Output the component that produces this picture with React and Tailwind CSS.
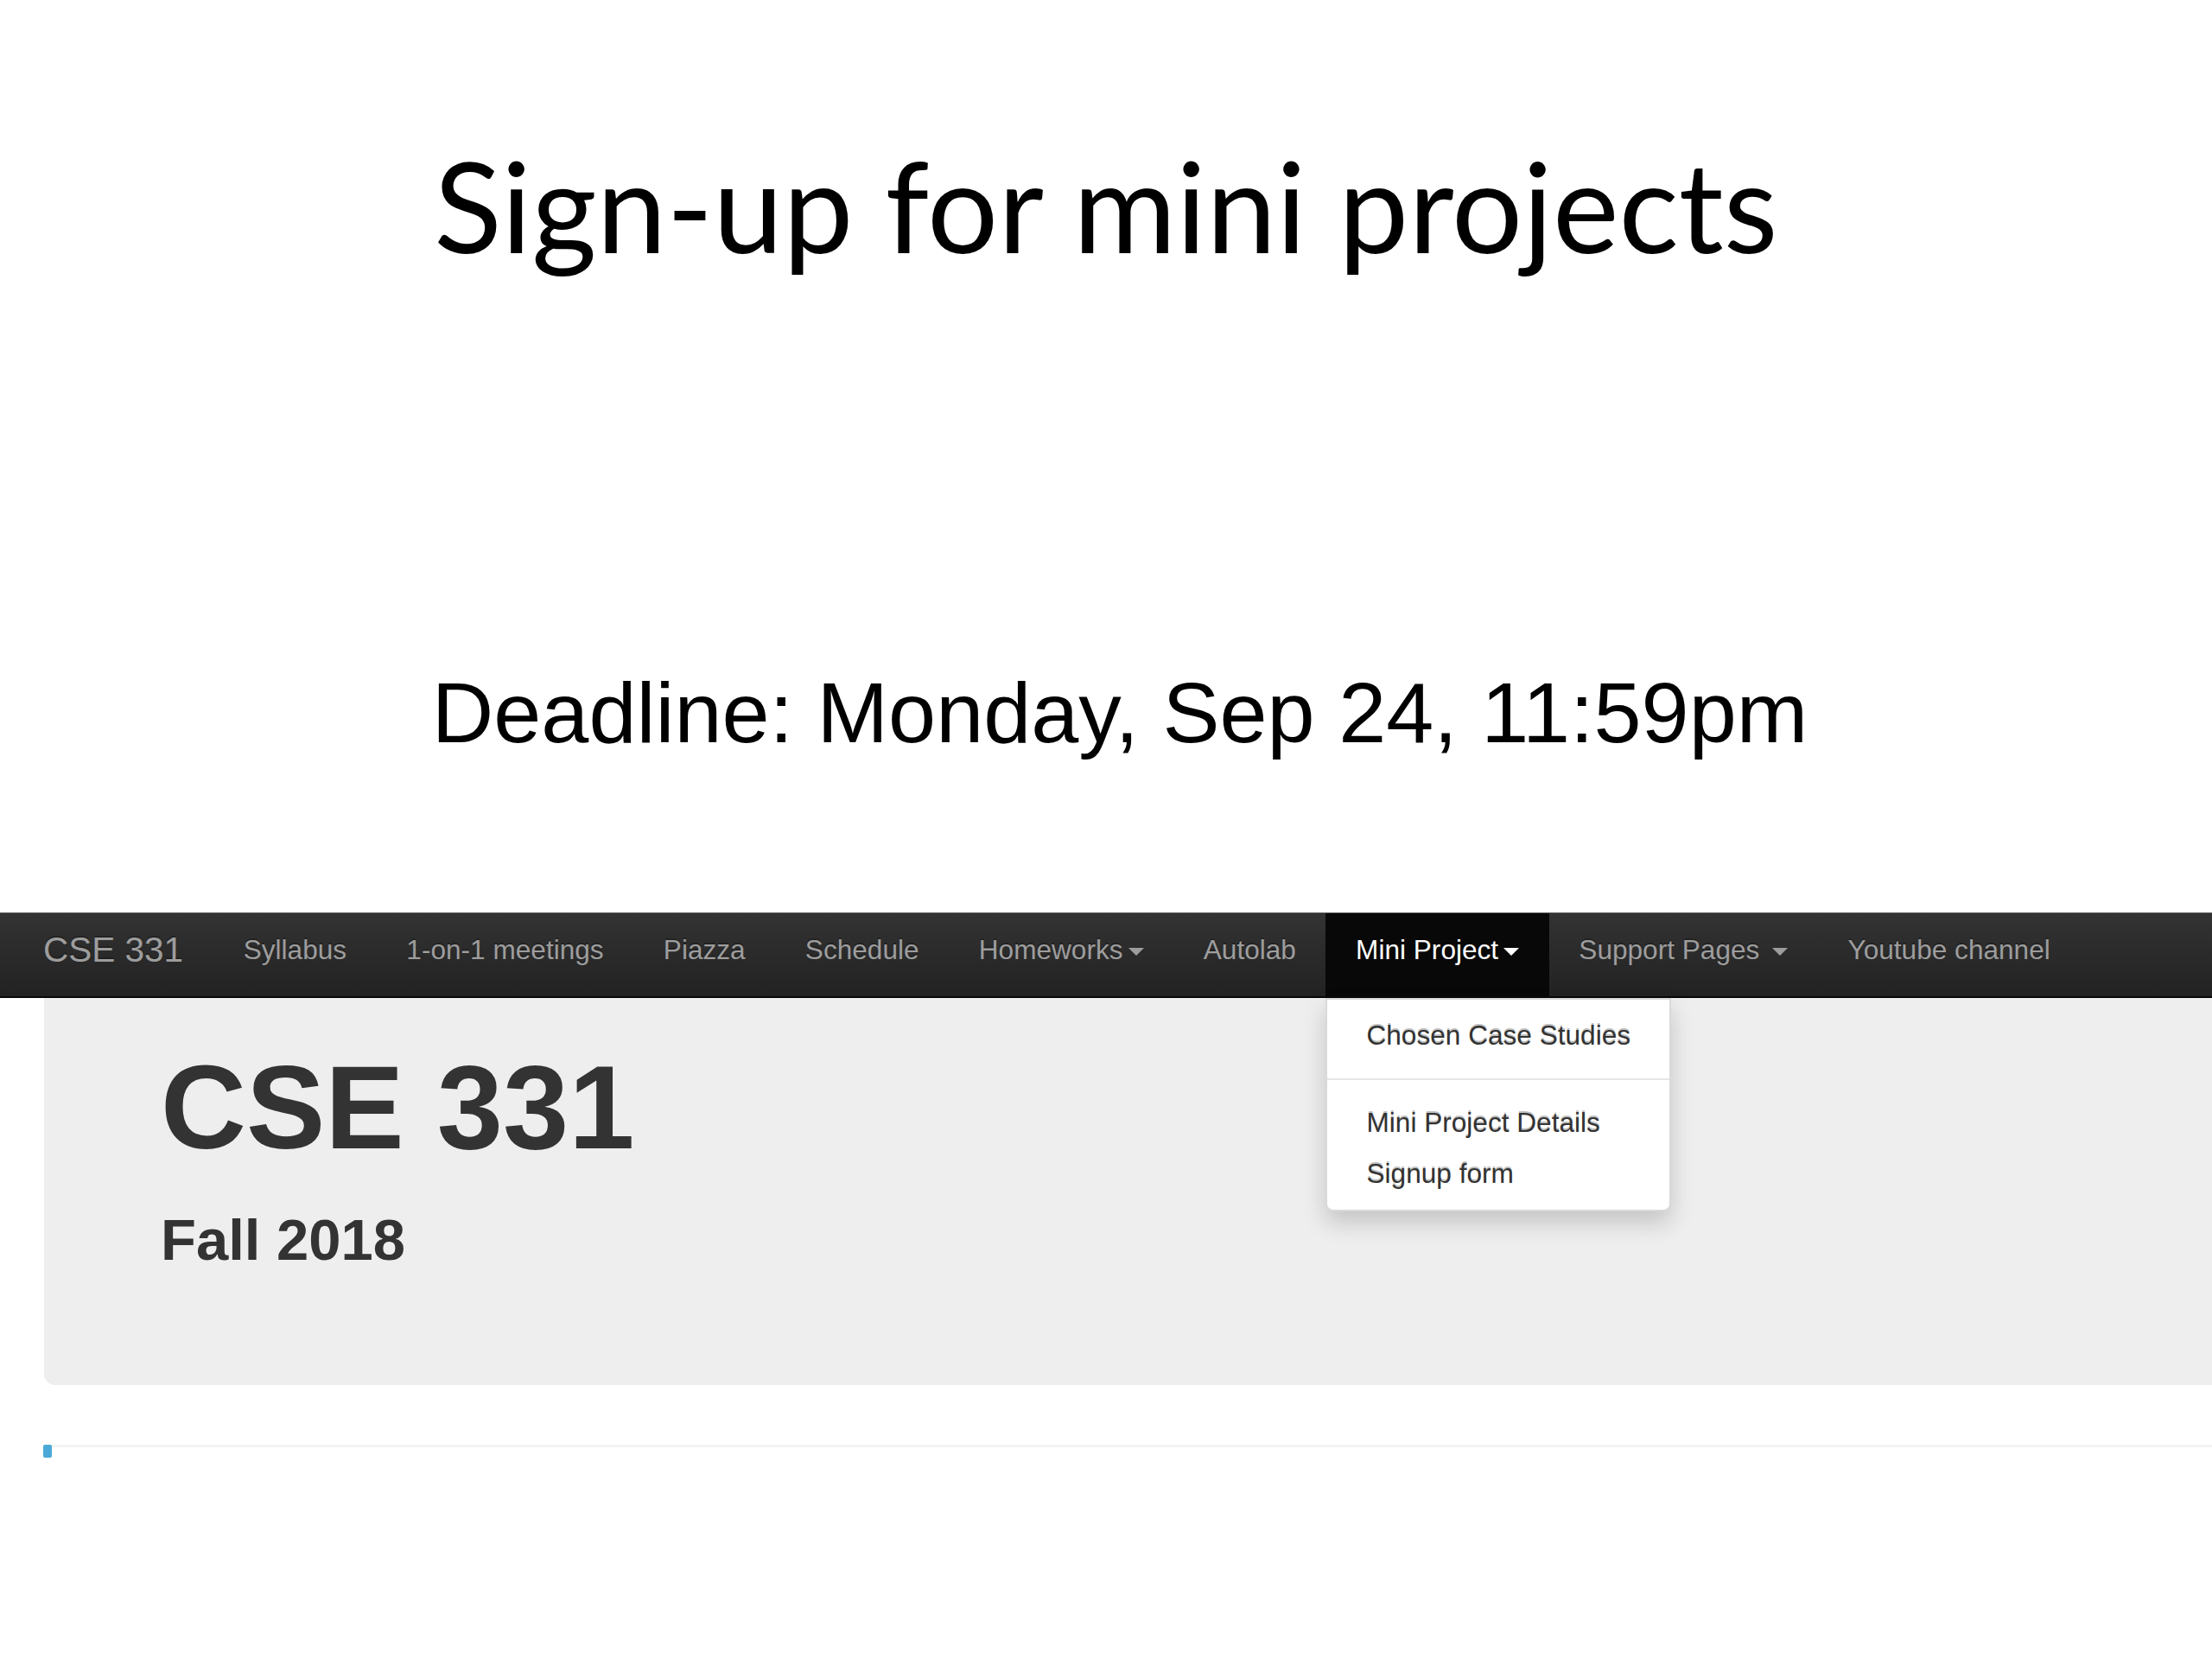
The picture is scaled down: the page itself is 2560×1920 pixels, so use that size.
const navLinks = [
  { label: 'Syllabus' },
  { label: '1-on-1 meetings' },
  { label: 'Piazza' },
  { label: 'Schedule' },
  { label: 'Homeworks', caret: true },
  { label: 'Autolab' },
  { label: 'Mini Project', caret: true, active: true },
  { label: 'Support Pages', caret: true, spaced: true },
  { label: 'Youtube channel' }
]

function Caret({ spaced }) {
  return (
    <span
      className={`inline-block align-middle w-0 h-0 border-t-[9px] border-t-current border-x-[9px] border-x-transparent ${spaced ? 'ml-[15px]' : 'ml-[6px]'}`}
    />
  )
}

function MiniProjectMenu() {
  const item = 'block px-[45px] py-[7px] leading-[45px] text-[31.6px] text-[#333] whitespace-nowrap'
  return (
    <div className="absolute left-0 top-[98px] z-10 bg-white border-2 border-black/15 rounded-b-[9px] py-[12px] shadow-[0_13px_27px_rgba(0,0,0,0.175)]">
      <a className={item}>Chosen Case Studies</a>
      <div className="h-[2px] my-[20px] bg-[#e5e5e5]" />
      <a className={item}>Mini Project Details</a>
      <a className={item}>Signup form</a>
    </div>
  )
}

function Navbar() {
  return (
    <nav className="h-[99px] flex pl-[16px] bg-linear-to-b from-[#333] to-[#222] border-t border-t-[#5a5a5a] border-b-2 border-b-[#080808] [text-shadow:0_-2px_0_rgba(0,0,0,0.25)]">
      <a className="pl-[34px] pr-[35px] pt-[20px] leading-[45px] text-[40.5px] text-[#9d9d9d]">CSE 331</a>
      {navLinks.map((link) => (
        <div
          key={link.label}
          className={`relative px-[34.6px] pt-[20px] leading-[45px] text-[31.6px] whitespace-nowrap ${
            link.active ? 'bg-[#080808] text-white' : 'text-[#9d9d9d]'
          }`}
        >
          {link.label}
          {link.caret && <Caret spaced={link.spaced} />}
          {link.active && <MiniProjectMenu />}
        </div>
      ))}
    </nav>
  )
}

export default function App() {
  return (
    <div className="w-[2560px] h-[1920px] overflow-hidden bg-white font-['Liberation_Sans',Arial,sans-serif]">
      {/* slide part */}
      <div className="h-[1056px] flex flex-col items-center">
        <h1 className="mt-[165px] font-['Lato',sans-serif] text-[145px] leading-none text-black">
          Sign-up for mini projects
        </h1>
        <p className="mt-[465px] pl-[32px] text-[99px] leading-none text-black">
          Deadline: Monday, Sep 24, 11:59pm
        </p>
      </div>

      {/* course page screenshot */}
      <Navbar />
      <div className="ml-[51px] h-[448px] bg-[#eee] rounded-bl-[13px] pl-[135px] pt-[52px] text-[#333]">
        <h1 className="text-[137px] font-bold leading-[1.1]">CSE 331</h1>
        <h2 className="mt-[40px] text-[67px] font-bold leading-[1.1]">Fall 2018</h2>
      </div>
      <div className="mt-[69px] ml-[50px] flex items-start">
        <div className="w-[10px] h-[15px] rounded-[2px] bg-[#4aa9d6]" />
        <div className="flex-1 h-[3px] bg-[#f3f3f3]" />
      </div>
    </div>
  )
}
